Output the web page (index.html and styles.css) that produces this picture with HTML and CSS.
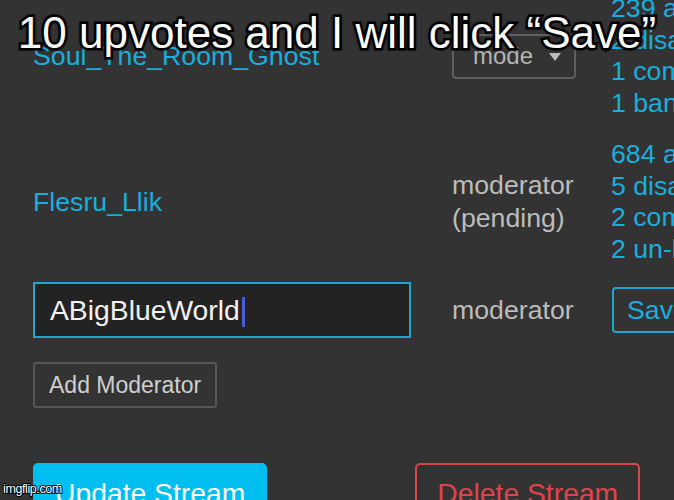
FILE: index.html
```html
<!DOCTYPE html>
<html>
<head>
<meta charset="utf-8">
<link rel="stylesheet" href="styles.css">
</head>
<body>
<div class="page">
  <div class="mods">
    <div class="name">Soul_The_Room_Ghost</div>
    <div class="role">
      <div class="select"><span>mode</span><svg class="tri" width="12" height="8" viewBox="0 0 12 8"><path d="M0 0 L12 0 L6 8 Z" fill="#bdbdbd"/></svg></div>
    </div>
    <div class="actions">
      <div>239 actions</div>
      <div>2 disabled</div>
      <div>1 comment</div>
      <div>1 ban</div>
    </div>

    <div class="name">Flesru_Llik</div>
    <div class="role two">
      <div>moderator</div>
      <div>(pending)</div>
    </div>
    <div class="actions">
      <div>684 actions</div>
      <div>5 disabled</div>
      <div>2 comments</div>
      <div>2 un-bans</div>
    </div>

    <div class="inputcell last"><div class="input">ABigBlueWorld<span class="caret"></span></div></div>
    <div class="role last">moderator</div>
    <div class="actions last"><button class="save">Save</button></div>
  </div>
  <button class="add">Add Moderator</button>
  <div class="footer">
    <button class="update">Update Stream</button>
    <button class="delete">Delete Stream</button>
  </div>
</div>
<div class="caption">10 upvotes and I will click “Save”</div>
<div class="watermark">imgflip.com</div>
</body>
</html>
```
FILE: styles.css
```css
html, body {
  margin: 0;
  padding: 0;
}
body {
  width: 674px;
  height: 500px;
  overflow: hidden;
  background: #333333;
  font-family: "Liberation Sans", Arial, sans-serif;
  position: relative;
}
.page {
  width: 1000px;
  padding-left: 33px;
  box-sizing: border-box;
}
.mods {
  margin-top: -7px;
  display: grid;
  grid-template-columns: 419px 159px 1fr;
  row-gap: 20px;
  align-items: center;
  font-size: 26.7px;
}
.last {
  margin-top: -3px;
}
.name {
  color: #1aaedd;
  line-height: 32px;
}
.role {
  color: #bcbcbc;
  line-height: 32px;
}
.role.two {
  line-height: 33px;
}
.actions {
  color: #1aaedd;
  line-height: 31.5px;
  white-space: nowrap;
}
.select {
  width: 124px;
  height: 45px;
  box-sizing: border-box;
  border: 2px solid #5e5e5e;
  border-radius: 4px;
  display: flex;
  align-items: center;
  padding-left: 19px;
  gap: 16px;
  font-size: 24px;
  color: #b5b5b5;
}
.tri {
  margin-top: 2px;
}
.input {
  width: 378px;
  height: 56px;
  box-sizing: border-box;
  border: 2px solid #1fa3cf;
  background: #232323;
  color: #f2f2f2;
  font-size: 28.3px;
  padding-left: 15px;
  display: flex;
  align-items: center;
}
.caret {
  display: inline-block;
  width: 3px;
  height: 30px;
  background: #4a5bd6;
  margin-left: 2px;
  margin-top: 4px;
}
button {
  font-family: "Liberation Sans", Arial, sans-serif;
  background: transparent;
  cursor: pointer;
}
.save {
  margin-left: 1px;
  height: 46px;
  border: 2px solid #1fa3cf;
  border-radius: 4px;
  color: #1aaedd;
  font-size: 26.7px;
  padding: 0 13px;
}
.add {
  display: block;
  margin-top: 24px;
  height: 46px;
  border: 2px solid #565656;
  border-radius: 3px;
  color: #cfcfcf;
  font-size: 23px;
  padding: 0 14px;
}
.footer {
  margin-top: 55px;
  display: flex;
  gap: 148px;
}
.update {
  border: 2px solid #00bff0;
  background: #00bff0;
  color: #ffffff;
  border-radius: 5px;
  font-size: 28.3px;
  line-height: 40px;
  padding: 8px 20px;
}
.delete {
  border: 2px solid #d9454c;
  color: #e0434b;
  border-radius: 5px;
  font-size: 28.3px;
  line-height: 40px;
  padding: 8px 20px;
}
.caption {
  position: absolute;
  top: 11px;
  left: 0;
  width: 674px;
  text-align: center;
  font-size: 44px;
  line-height: 44px;
  color: #ffffff;
  white-space: nowrap;
  -webkit-text-stroke: 5px #000;
  paint-order: stroke fill;
  text-shadow: 0 0 4px #000, 0 0 3px #000;
}
.watermark {
  position: absolute;
  left: 3px;
  top: 482px;
  font-size: 12.5px;
  letter-spacing: -0.4px;
  color: #ffffff;
  -webkit-text-stroke: 2px #000;
  paint-order: stroke fill;
}
```
